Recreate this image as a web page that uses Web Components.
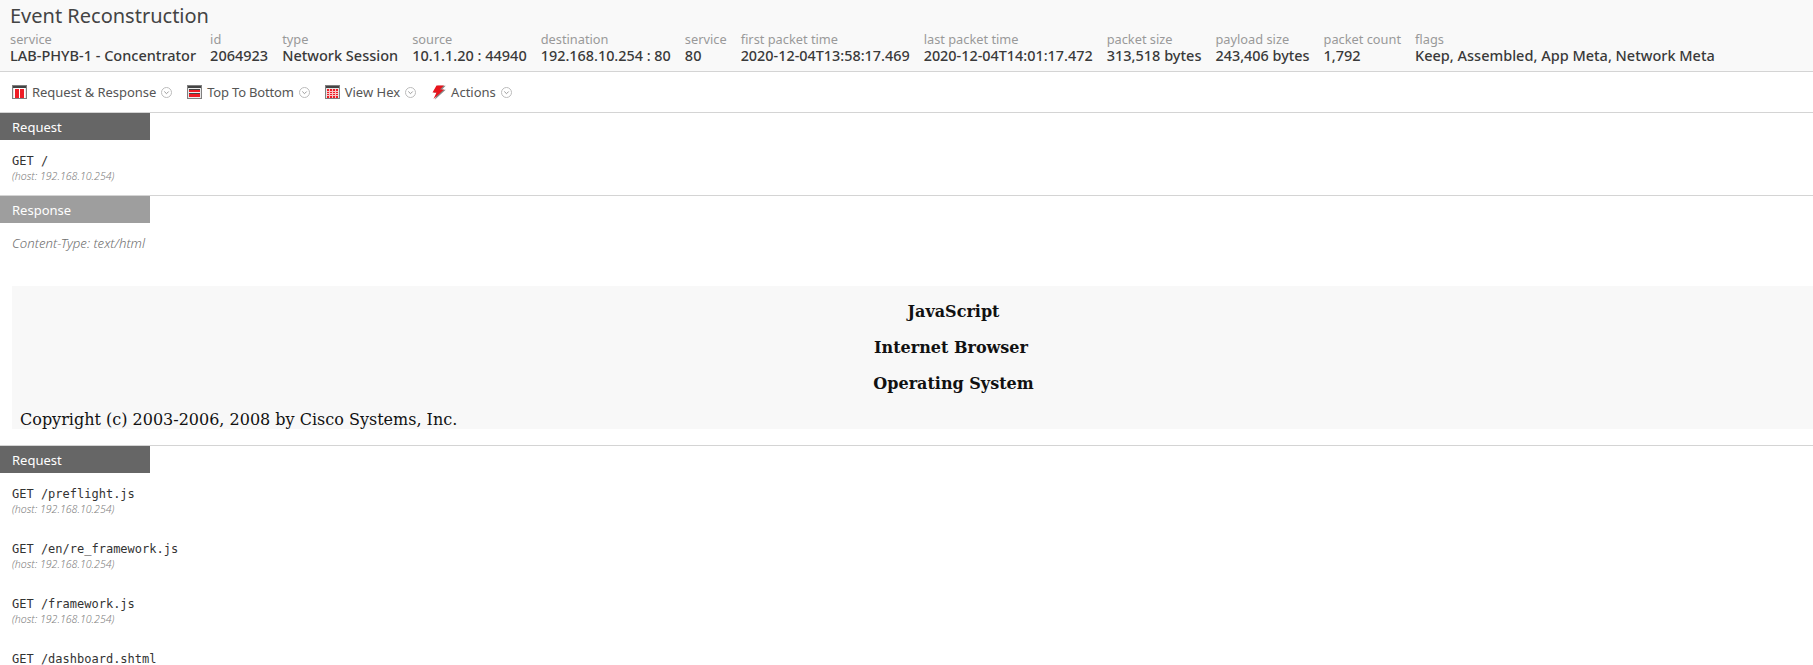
<!DOCTYPE html>
<html>
<head>
<meta charset="utf-8">
<title>Event Reconstruction</title>
<style>
    html, body { margin: 0; height: 665px; overflow: hidden; background: #fff; }
    body { font-family: "Noto Sans", "Open Sans", sans-serif; color: #333; }
    recon-meta.tight { --value-size: 14.400px; }
</style>
</head>
<body>
<recon-page></recon-page>

<script>
class ReconMeta extends HTMLElement {
    constructor() {
        super();
        this.attachShadow({mode:'open'});
        this.shadowRoot.innerHTML = `
            <style>
                :host { display: block; white-space: nowrap; }
                :host(.tight) { --value-size: 14.400px; }
                .label { font-size: 12.800px; line-height: 17px; color: #999; }
                .value { font-size: var(--value-size, 14.500px); line-height: 15px; font-weight: 500; color: #3a3a3a; }
            </style>
            <div class="label">${this.getAttribute('label')}</div>
            <div class="value">${this.getAttribute('value')}</div>
        `;
    }
}
window.customElements.define('recon-meta', ReconMeta);

class ReconHeader extends HTMLElement {
    constructor() {
        super();
        this.attachShadow({mode:'open'});
        this.shadowRoot.innerHTML = `
            <style>
                :host { display: block; height: 71px; background: #f9f9f9; border-bottom: 1px solid #d4d4d4; padding-left: 10px; }
                h1 { margin: 0; padding-top: 2px; height: 29px; font-size: 20px; line-height: 28px; font-weight: 400; color: #444; }
                .fields { display: flex; column-gap: 14px; }
            </style>
            <h1>Event Reconstruction</h1>
            <div class="fields"><slot></slot></div>
        `;
    }
}
window.customElements.define('recon-header', ReconHeader);

const frame = `<rect x=".5" y=".5" width="14" height="13" fill="#e6e6e6" stroke="#808080"/><rect x="1" y="1" width="13" height="2" fill="#444"/>`;
const icons = {
    columns: `${frame}<rect x="2" y="3" width="11" height="10" fill="#fff"/><rect x="3" y="4" width="4" height="9" fill="#ee1c25"/><rect x="8" y="4" width="4" height="9" fill="#ee1c25"/>`,
    rows: `${frame}<rect x="2" y="3" width="11" height="10" fill="#eee"/><rect x="2" y="4" width="11" height="1" fill="#444"/><rect x="2" y="5" width="11" height="2" fill="#ee1c25"/><rect x="2" y="8" width="11" height="1" fill="#444"/><rect x="2" y="9" width="11" height="3" fill="#ee1c25"/>`,
    hex: `${frame}<rect x="2" y="4" width="11" height="9" fill="#ee1c25"/><path d="M4.500 4v9M7.500 4v9M10.500 4v9M2 6.500h11M2 8.500h11M2 10.500h11" stroke="#f8c4c4" fill="none"/>`,
    bolt: `<path d="M6 1h8L10 5h4L3 15 6 8H2z" transform="translate(.7 -.2)" fill="#888"/><path d="M5.500 .5h7.500L9 4.500h4L2.500 14 5.500 7.500H1.500z" fill="#e8141c"/>`
};

class ReconTool extends HTMLElement {
    constructor() {
        super();
        this.attachShadow({mode:'open'});
        this.shadowRoot.innerHTML = `
            <style>
                :host { display: flex; align-items: center; height: 40px; font-size: 13px; color: #555; white-space: nowrap; }
                .icon { width: 15px; height: 14px; margin-right: 5px; flex: none; overflow: visible; }
                .chev { width: 11px; height: 11px; margin-left: 5px; flex: none; }
            </style>
            <svg class="icon" viewBox="0 0 15 14">${icons[this.getAttribute('icon')]}</svg>
            <slot></slot>
            <svg class="chev" viewBox="0 0 11 11"><circle cx="5.500" cy="5.500" r="5" fill="none" stroke="#bbb"/><path d="M3.300 4.500l2.200 2.200 2.200-2.200" fill="none" stroke="#999"/></svg>
        `;
    }
}
window.customElements.define('recon-tool', ReconTool);

class ReconToolbar extends HTMLElement {
    constructor() {
        super();
        this.attachShadow({mode:'open'});
        this.shadowRoot.innerHTML = `
            <style>
                :host { display: flex; column-gap: 15px; padding-left: 12px; height: 40px; border-bottom: 1px solid #d4d4d4; }
            </style>
            <slot></slot>
        `;
    }
}
window.customElements.define('recon-toolbar', ReconToolbar);

class ReconBar extends HTMLElement {
    constructor() {
        super();
        this.attachShadow({mode:'open'});
        const bg = this.getAttribute('kind') === 'response' ? '#9e9e9e' : '#666';
        this.shadowRoot.innerHTML = `
            <style>
                :host { display: block; width: 150px; height: 27px; box-sizing: border-box; padding-left: 12px; background: ${bg}; color: #fff; font-size: 13px; line-height: 28px; }
            </style>
            <slot></slot>
        `;
    }
}
window.customElements.define('recon-bar', ReconBar);

class ReconRequest extends HTMLElement {
    constructor() {
        super();
        this.attachShadow({mode:'open'});
        const host = this.hasAttribute('nohost') ? '' : '<div class="host">(host: 192.168.10.254)</div>';
        this.shadowRoot.innerHTML = `
            <style>
                :host { display: block; height: 55px; box-sizing: border-box; padding: 13px 0 0 12px; }
                .line { font-family: "DejaVu Sans Mono", monospace; font-size: 12px; line-height: 16px; color: #333; white-space: pre; }
                .host { font-size: 10.600px; line-height: 15px; font-style: italic; font-weight: 300; color: #808080; }
            </style>
            <div class="line"><slot></slot></div>
            ${host}
        `;
    }
}
window.customElements.define('recon-request', ReconRequest);

class ReconPayload extends HTMLElement {
    constructor() {
        super();
        this.attachShadow({mode:'open'});
        this.shadowRoot.innerHTML = `
            <style>
                :host { display: block; margin-left: 12px; height: 143px; background: #f8f8f8; font-family: "DejaVu Serif", serif; font-size: 16px; color: #111; overflow: hidden; }
                .heads { display: grid; align-content: start; row-gap: 17px; padding: 16px 0 0 82px; height: 117px; box-sizing: border-box; font-weight: 700; text-align: center; line-height: 19px; }
                .shift { padding-right: 5px; }
                .copy { padding: 7px 0 0 8px; line-height: 19px; }
            </style>
            <div class="heads">
                <div>JavaScript</div>
                <div class="shift">Internet Browser</div>
                <div>Operating System</div>
            </div>
            <div class="copy">Copyright (c) 2003-2006, 2008 by Cisco Systems, Inc.</div>
        `;
    }
}
window.customElements.define('recon-payload', ReconPayload);

class ReconPage extends HTMLElement {
    constructor() {
        super();
        this.attachShadow({mode:'open'});
        this.shadowRoot.innerHTML = `
            <style>
                :host { display: block; }
                .section { border-bottom: 1px solid #d4d4d4; }
                .s1 { height: 82px; }
                .s2 { height: 249px; }
                .ctype { padding: 0 0 0 12px; height: 63px; box-sizing: border-box; font-size: 13.200px; line-height: 41px; font-style: italic; font-weight: 300; color: #707070; }
            </style>
            <recon-header>
                <recon-meta label="service" value="LAB-PHYB-1 - Concentrator"></recon-meta>
                <recon-meta label="id" value="2064923"></recon-meta>
                <recon-meta label="type" value="Network Session"></recon-meta>
                <recon-meta label="source" value="10.1.1.20 : 44940"></recon-meta>
                <recon-meta class="tight" label="destination" value="192.168.10.254 : 80"></recon-meta>
                <recon-meta label="service" value="80"></recon-meta>
                <recon-meta class="tight" label="first packet time" value="2020-12-04T13:58:17.469"></recon-meta>
                <recon-meta class="tight" label="last packet time" value="2020-12-04T14:01:17.472"></recon-meta>
                <recon-meta label="packet size" value="313,518 bytes"></recon-meta>
                <recon-meta class="tight" label="payload size" value="243,406 bytes"></recon-meta>
                <recon-meta label="packet count" value="1,792"></recon-meta>
                <recon-meta label="flags" value="Keep, Assembled, App Meta, Network Meta"></recon-meta>
            </recon-header>
            <recon-toolbar>
                <recon-tool icon="columns" style="letter-spacing:-.05px">Request &amp; Response</recon-tool>
                <recon-tool icon="rows" style="letter-spacing:-.18px">Top To Bottom</recon-tool>
                <recon-tool icon="hex">View Hex</recon-tool>
                <recon-tool icon="bolt">Actions</recon-tool>
            </recon-toolbar>
            <div class="section s1">
                <recon-bar>Request</recon-bar>
                <recon-request>GET /</recon-request>
            </div>
            <div class="section s2">
                <recon-bar kind="response">Response</recon-bar>
                <div class="ctype">Content-Type: text/html</div>
                <recon-payload></recon-payload>
            </div>
            <div>
                <recon-bar>Request</recon-bar>
                <recon-request>GET /preflight.js</recon-request>
                <recon-request>GET /en/re_framework.js</recon-request>
                <recon-request>GET /framework.js</recon-request>
                <recon-request nohost>GET /dashboard.shtml</recon-request>
            </div>
        `;
    }
}
window.customElements.define('recon-page', ReconPage);
</script>
</body>
</html>
